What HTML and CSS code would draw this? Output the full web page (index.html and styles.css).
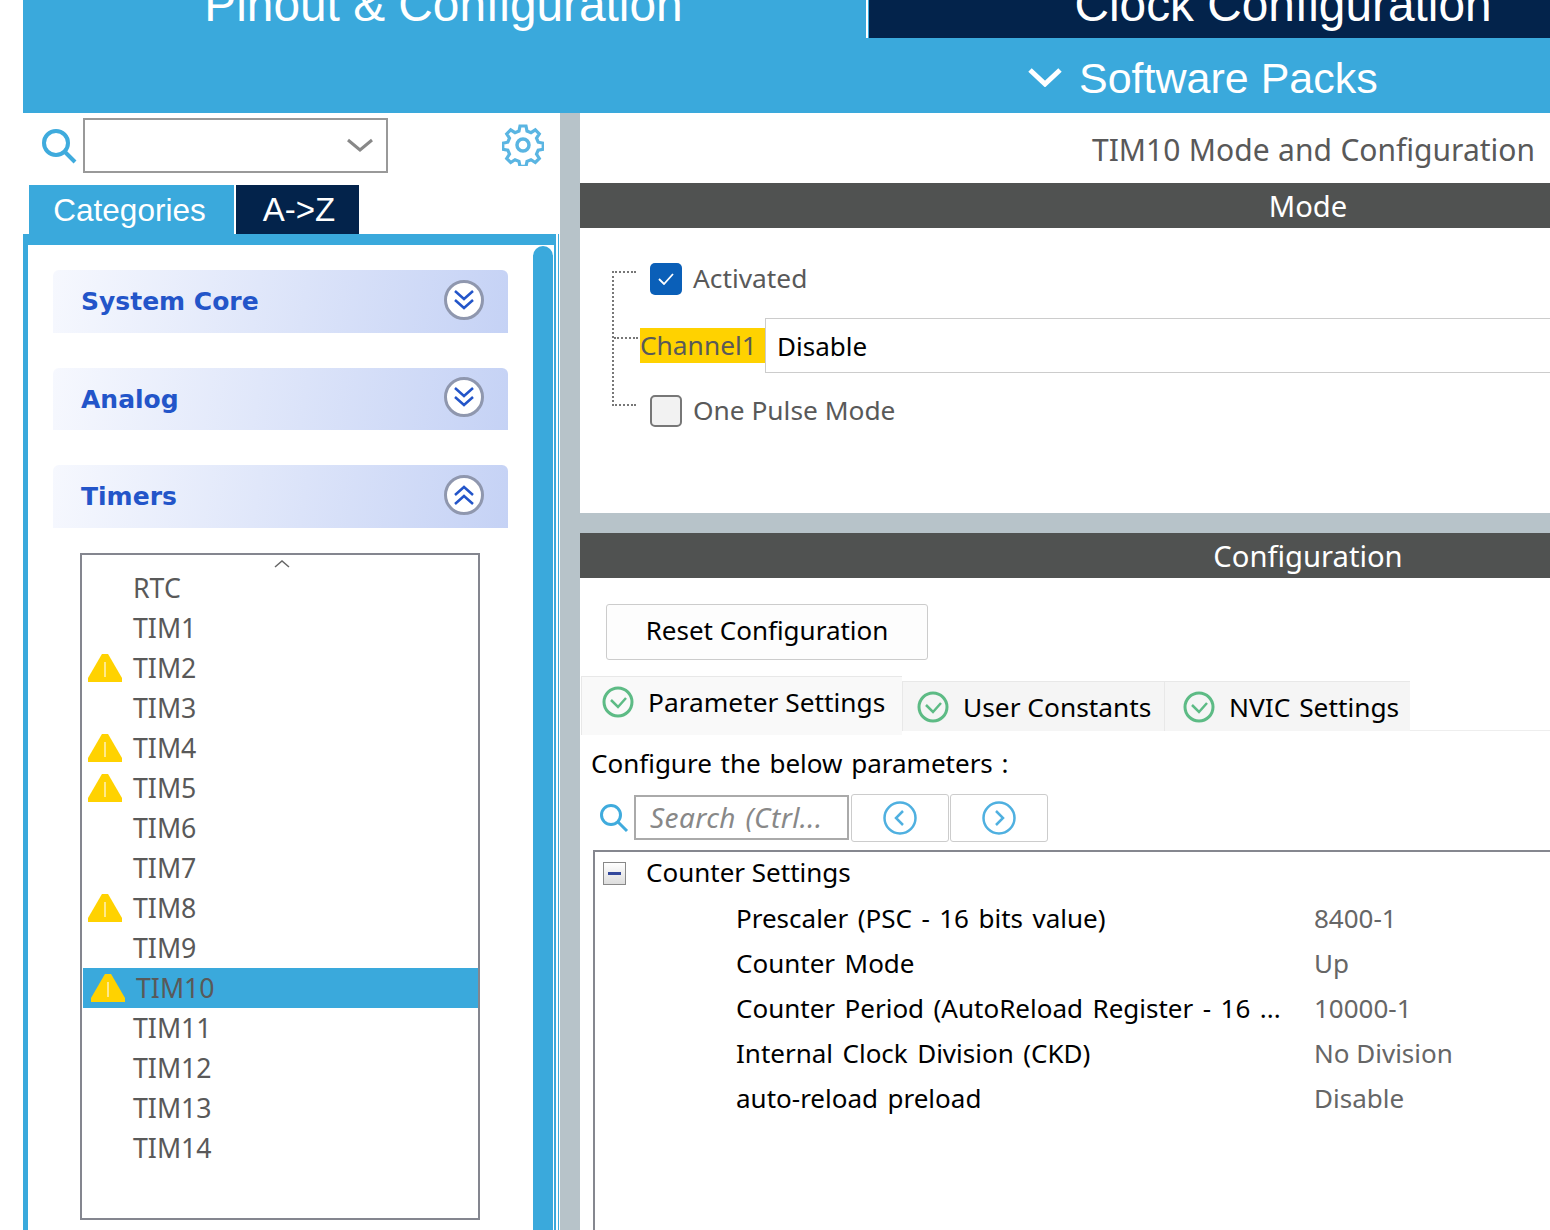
FILE: index.html
```html
<!DOCTYPE html>
<html lang="en">
<head>
  <meta charset="UTF-8">
  <title>TIM10 Mode and Configuration</title>
  <link rel="stylesheet" href="styles.css">
</head>
<body>

  <header class="header">
    <div class="main-tabs">
      <div class="main-tab active">Pinout &amp; Configuration</div>
      <div class="main-tab dark">Clock Configuration</div>
    </div>
    <div class="packs">
      <svg class="packs-arrow" width="34" height="20" viewBox="0 0 34 20"><path d="M2 3 L17 17 L32 3" fill="none" stroke="#fff" stroke-width="5"/></svg>
      <span>Software Packs</span>
    </div>
  </header>

  <div class="main">

    <!-- LEFT SIDE -->
    <aside class="side">
      <div class="side-search">
        <svg class="search-icon" width="36" height="36" viewBox="0 0 36 36"><circle cx="15" cy="15" r="12" fill="none" stroke="#3fabdd" stroke-width="4"/><path d="M24 24 L34 34" stroke="#3fabdd" stroke-width="4"/></svg>
        <div class="combo">
          <svg width="26" height="14" viewBox="0 0 26 14"><path d="M1 2 L13 12 L25 2" fill="none" stroke="#888" stroke-width="3"/></svg>
        </div>
        <svg class="gear" width="42" height="42" viewBox="0 0 42 42">
          <circle cx="21" cy="21" r="6" fill="none" stroke="#5ab5e2" stroke-width="3.500"/>
          <path d="M18 2h6l1 5 4 1.700 4.300-2.800 4 4-2.800 4.300 1.700 4 5 1v6l-5 1-1.700 4 2.800 4.300-4 4-4.300-2.800-4 1.700-1 5h-6l-1-5-4-1.700-4.300 2.800-4-4 2.800-4.300-1.700-4-5-1v-6l5-1 1.700-4-2.800-4.300 4-4 4.300 2.800 4-1.700z" fill="none" stroke="#5ab5e2" stroke-width="3.200"/>
        </svg>
      </div>

      <div class="side-tabs">
        <div class="side-tab active">Categories</div>
        <div class="side-tab dark">A-&gt;Z</div>
      </div>

      <div class="cat-panel">
        <div class="cat-content">
          <div class="cat">
            <span>System Core</span>
            <svg class="cat-btn" width="40" height="40" viewBox="0 0 40 40"><circle cx="20" cy="20" r="18.500" fill="#fff" stroke="#8f97ae" stroke-width="3"/><path d="M11 11 L20 19 L29 11 M11 20 L20 28 L29 20" fill="none" stroke="#2355c9" stroke-width="2.500"/></svg>
          </div>
          <div class="cat short">
            <span>Analog</span>
            <svg class="cat-btn" width="40" height="40" viewBox="0 0 40 40"><circle cx="20" cy="20" r="18.500" fill="#fff" stroke="#8f97ae" stroke-width="3"/><path d="M11 11 L20 19 L29 11 M11 20 L20 28 L29 20" fill="none" stroke="#2355c9" stroke-width="2.500"/></svg>
          </div>
          <div class="cat">
            <span>Timers</span>
            <svg class="cat-btn" width="40" height="40" viewBox="0 0 40 40"><circle cx="20" cy="20" r="18.500" fill="#fff" stroke="#8f97ae" stroke-width="3"/><path d="M11 20 L20 12 L29 20 M11 29 L20 21 L29 29" fill="none" stroke="#2355c9" stroke-width="2.500"/></svg>
          </div>

          <div class="list-box">
            <svg class="list-up" width="16" height="9" viewBox="0 0 16 9"><path d="M1 8 L8 2 L15 8" fill="none" stroke="#666" stroke-width="1.500"/></svg>
            <div class="row"><span class="slot"></span>RTC</div>
            <div class="row"><span class="slot"></span>TIM1</div>
            <div class="row"><span class="slot warn"></span>TIM2</div>
            <div class="row"><span class="slot"></span>TIM3</div>
            <div class="row"><span class="slot warn"></span>TIM4</div>
            <div class="row"><span class="slot warn"></span>TIM5</div>
            <div class="row"><span class="slot"></span>TIM6</div>
            <div class="row"><span class="slot"></span>TIM7</div>
            <div class="row"><span class="slot warn"></span>TIM8</div>
            <div class="row"><span class="slot"></span>TIM9</div>
            <div class="row selected"><span class="slot warn"></span>TIM10</div>
            <div class="row"><span class="slot"></span>TIM11</div>
            <div class="row"><span class="slot"></span>TIM12</div>
            <div class="row"><span class="slot"></span>TIM13</div>
            <div class="row"><span class="slot"></span>TIM14</div>
          </div>
        </div>
        <div class="scrollbar"></div>
      </div>
    </aside>

    <!-- RIGHT SIDE -->
    <section class="right">
      <div class="title">TIM10 Mode and Configuration</div>
      <div class="bar mode-bar">Mode</div>

      <div class="mode">
        <div class="tree-line"></div>
        <div class="mode-row">
          <span class="check on"><svg width="16" height="12" viewBox="0 0 16 12"><path d="M1 6 L6 11 L15 1" fill="none" stroke="#fff" stroke-width="1.800"/></svg></span>
          <span class="mode-label">Activated</span>
        </div>
        <div class="channel-row">
          <span class="channel">Channel1</span>
          <div class="select">Disable</div>
        </div>
        <div class="mode-row pulse">
          <span class="check"></span>
          <span class="mode-label">One Pulse Mode</span>
        </div>
      </div>

      <div class="gap"></div>
      <div class="bar config-bar">Configuration</div>

      <button class="reset">Reset Configuration</button>

      <div class="tabs">
        <div class="tab active">
          <svg width="32" height="32" viewBox="0 0 32 32"><circle cx="16" cy="16" r="14" fill="none" stroke="#5dbb85" stroke-width="3"/><path d="M9 14 L16 21 L24 12" fill="none" stroke="#5dbb85" stroke-width="2.500"/></svg>
          <span>Parameter Settings</span>
        </div>
        <div class="tab">
          <svg width="32" height="32" viewBox="0 0 32 32"><circle cx="16" cy="16" r="14" fill="none" stroke="#5dbb85" stroke-width="3"/><path d="M9 14 L16 21 L24 12" fill="none" stroke="#5dbb85" stroke-width="2.500"/></svg>
          <span>User Constants</span>
        </div>
        <div class="tab">
          <svg width="32" height="32" viewBox="0 0 32 32"><circle cx="16" cy="16" r="14" fill="none" stroke="#5dbb85" stroke-width="3"/><path d="M9 14 L16 21 L24 12" fill="none" stroke="#5dbb85" stroke-width="2.500"/></svg>
          <span>NVIC Settings</span>
        </div>
      </div>

      <div class="params-title">Configure the below parameters :</div>

      <div class="param-search">
        <svg width="30" height="30" viewBox="0 0 30 30"><circle cx="12" cy="12" r="9.500" fill="none" stroke="#3fabdd" stroke-width="3"/><path d="M19 19 L28 28" stroke="#3fabdd" stroke-width="3"/></svg>
        <div class="search-input">Search (Ctrl...</div>
        <div class="nav-btn"><svg width="34" height="34" viewBox="0 0 34 34"><circle cx="17" cy="17" r="15.500" fill="none" stroke="#4fb0e0" stroke-width="2.500"/><path d="M20 10 L13 17 L20 24" fill="none" stroke="#4fb0e0" stroke-width="2.500"/></svg></div>
        <div class="nav-btn"><svg width="34" height="34" viewBox="0 0 34 34"><circle cx="17" cy="17" r="15.500" fill="none" stroke="#4fb0e0" stroke-width="2.500"/><path d="M14 10 L21 17 L14 24" fill="none" stroke="#4fb0e0" stroke-width="2.500"/></svg></div>
      </div>

      <div class="param-tree">
        <div class="group"><span class="minus"></span><span class="group-name">Counter Settings</span></div>
        <div class="param"><span class="param-name">Prescaler (PSC - 16 bits value)</span><span class="param-val">8400-1</span></div>
        <div class="param"><span class="param-name">Counter Mode</span><span class="param-val">Up</span></div>
        <div class="param"><span class="param-name">Counter Period (AutoReload Register - 16 ...</span><span class="param-val">10000-1</span></div>
        <div class="param"><span class="param-name">Internal Clock Division (CKD)</span><span class="param-val">No Division</span></div>
        <div class="param"><span class="param-name">auto-reload preload</span><span class="param-val">Disable</span></div>
      </div>
    </section>
  </div>

</body>
</html>
```

FILE: styles.css
```css
html, body {
  margin: 0;
  height: 1230px;
  overflow: hidden;
}

body {
  font-family: 'Noto Sans', 'Open Sans', sans-serif;
  font-size: 26px;
  background-color: #fff;
  color: #595959;
}

/* top header */
.header {
  margin-left: 23px;
  height: 113px;
  background-color: #3aa9dc;
  font-family: 'Liberation Sans', Arial, sans-serif;
  color: #fff;
  overflow: hidden;
}

.main-tabs {
  display: flex;
  height: 68px;
  margin-top: -30px;
}

.main-tab {
  font-size: 47.8px;
  line-height: 70px;
  text-align: center;
  flex: none;
}

.main-tab.active {
  width: 841px;
  padding-right: 2px;
  border-right: 2px solid #fff;
}

.main-tab.dark {
  width: 828px;
  margin-left: 1px;
  background-color: #03234b;
}

.packs {
  display: flex;
  align-items: center;
  gap: 17px;
  height: 68px;
  padding: 6px 0 0 1005px;
  font-size: 43px;
}

.packs-arrow {
  margin-bottom: 3px;
}

/* layout */
.main {
  display: flex;
  height: 1117px;
  margin-left: 23px;
  background-color: #b7c3c9;
}

.side {
  width: 537px;
  flex: none;
  background-color: #fff;
  overflow: hidden;
}

.side-search {
  display: flex;
  align-items: center;
  height: 72px;
  padding-left: 18px;
}

.search-icon {
  margin-right: 6px;
  margin-top: -6px;
}

.combo {
  display: flex;
  align-items: center;
  justify-content: flex-end;
  box-sizing: border-box;
  width: 305px;
  height: 55px;
  margin-top: -8px;
  padding-right: 13px;
  border: 2px solid #999;
}

.gear {
  margin-left: 114px;
  margin-top: -8px;
}

.side-tabs {
  display: flex;
  height: 49px;
  padding-left: 6px;
  font-family: 'Liberation Sans', Arial, sans-serif;
  color: #fff;
}

.side-tab {
  box-sizing: border-box;
  line-height: 50px;
  text-align: center;
}

.side-tab.active {
  width: 205px;
  padding-right: 4px;
  font-size: 31.5px;
  background-color: #3aa9dc;
}

.side-tab.dark {
  width: 123px;
  margin-left: 2px;
  padding-left: 3px;
  font-size: 33px;
  background-color: #03234b;
}

.cat-panel {
  display: flex;
  box-sizing: border-box;
  width: 533px;
  height: 996px;
  border-top: 11px solid #3aa9dc;
  border-left: 5px solid #3aa9dc;
  border-right: 2px solid #3aa9dc;
  box-shadow: 2px 0 0 #fff, 3px 0 0 #3aa9dc;
}

.cat-content {
  width: 505px;
  flex: none;
  padding-top: 25px;
}

.scrollbar {
  width: 20px;
  margin-top: 1px;
  border-radius: 10px 10px 0 0;
  background-color: #3aa9dc;
}

.cat {
  display: flex;
  align-items: center;
  justify-content: space-between;
  box-sizing: border-box;
  width: 455px;
  height: 63px;
  margin: 0 0 35px 25px;
  padding: 0 24px 0 28px;
  border-radius: 6px 6px 0 0;
  background: linear-gradient(100deg, #f6f8fe, #c5d2f5);
  font-family: 'DejaVu Sans', Verdana, sans-serif;
  font-size: 25px;
  font-weight: bold;
  color: #2355c9;
}

.cat.short {
  height: 62px;
}

.cat-btn {
  margin-top: -4px;
}

.list-box {
  position: relative;
  box-sizing: border-box;
  width: 400px;
  height: 667px;
  margin: -10px 0 0 52px;
  padding-top: 13px;
  border: 2px solid #84868f;
}

.list-up {
  position: absolute;
  left: 192px;
  top: 4px;
}

.row {
  display: flex;
  align-items: center;
  box-sizing: border-box;
  height: 40px;
  padding-bottom: 2px;
  font-size: 26.7px;
}

.slot {
  width: 34px;
  height: 28px;
  margin: 2px 11px 0 6px;
  flex: none;
}

.slot.warn {
  background-color: #ffd200;
  clip-path: polygon(41% 0, 59% 0, 100% 86%, 100% 100%, 0 100%, 0 86%);
  background-image: linear-gradient(#ffe98a, #ffe98a);
  background-size: 2px 15px;
  background-position: 50% 8px;
  background-repeat: no-repeat;
}

.row.selected {
  margin-left: 1px;
  padding-left: 2px;
  background-color: #3aa9dc;
}

/* right side */
.right {
  width: 970px;
  flex: none;
  margin-left: 20px;
  background-color: #fff;
  overflow: hidden;
}

.title {
  height: 70px;
  padding-right: 15px;
  line-height: 74px;
  text-align: right;
  font-size: 30px;
  word-spacing: 0.7px;
  white-space: nowrap;
}

.bar {
  width: 1456px;
  height: 45px;
  line-height: 47px;
  background-color: #505251;
  color: #fff;
  text-align: center;
  font-size: 29.2px;
}

.mode {
  position: relative;
  height: 285px;
}

.tree-line {
  position: absolute;
  left: 32px;
  top: 43px;
  width: 24px;
  height: 135px;
  border-left: 2px dotted #777;
  border-top: 2px dotted #777;
  border-bottom: 2px dotted #777;
  box-sizing: border-box;
}

.tree-line::after {
  content: "";
  position: absolute;
  left: 0;
  top: 64px;
  width: 24px;
  border-top: 2px dotted #777;
}

.mode-row {
  display: flex;
  align-items: center;
  gap: 11px;
  height: 32px;
  padding: 35px 0 0 70px;
}

.mode-row.pulse {
  padding-top: 22px;
}

.mode-label {
  margin-top: -3px;
  font-size: 26.3px;
}

.check {
  display: flex;
  align-items: center;
  justify-content: center;
  box-sizing: border-box;
  width: 32px;
  height: 32px;
  border: 2px solid #777;
  border-radius: 5px;
  background-color: #f2f2f2;
}

.check.on {
  border: none;
  background-color: #0a5fb8;
}

.channel-row {
  display: flex;
  align-items: center;
  margin: 23px 0 0 60px;
}

.channel {
  box-sizing: border-box;
  width: 125px;
  height: 35px;
  flex: none;
  line-height: 35px;
  background-color: #ffd200;
  font-size: 26.3px;
  white-space: nowrap;
}

.select {
  box-sizing: border-box;
  width: 900px;
  height: 55px;
  flex: none;
  padding-left: 11px;
  line-height: 54px;
  border: 1px solid #ccc;
  color: #000;
}

.gap {
  height: 20px;
  background-color: #b7c3c9;
}

.reset {
  display: block;
  box-sizing: border-box;
  width: 322px;
  height: 56px;
  margin: 26px 0 16px 26px;
  padding-bottom: 5px;
  border: 1px solid #ccc;
  border-radius: 3px;
  background-color: #fdfdfd;
  color: #000;
  font-family: inherit;
  font-size: 26px;
}

.tabs {
  display: flex;
  align-items: flex-start;
  height: 59px;
  margin-left: 1px;
  color: #000;
  background: linear-gradient(#fff 54px, #eee 54px, #eee 55px, #fff 55px);
}

.tab {
  display: flex;
  align-items: center;
  box-sizing: border-box;
  width: 262px;
  height: 50px;
  margin-top: 5px;
  padding-left: 14px;
  gap: 14px;
  background-color: #f5f5f5;
  border-top: 1px solid #e8e8e8;
  border-left: 1px solid #e8e8e8;
  font-size: 26.3px;
  white-space: nowrap;
}

.tab:last-child {
  width: 246px;
  padding-left: 18px;
  word-spacing: 2px;
}

.tab.active {
  width: 321px;
  height: 59px;
  margin-top: 0;
  padding: 0 0 9px 20px;
  background-color: #f9f9f9;
}

.params-title {
  height: 54px;
  padding-left: 11px;
  margin-top: 5px;
  line-height: 46px;
  color: #000;
  word-spacing: 2px;
  white-space: nowrap;
}

.param-search {
  display: flex;
  align-items: center;
  height: 48px;
  padding-left: 19px;
}

.search-input {
  box-sizing: border-box;
  width: 215px;
  height: 45px;
  margin: -2px 0 0 5px;
  padding-left: 14px;
  line-height: 41px;
  border: 2px solid #aaa;
  font-size: 28px;
  font-style: italic;
  letter-spacing: 0.4px;
  word-spacing: 2px;
  color: #888;
  white-space: nowrap;
  overflow: hidden;
}

.nav-btn {
  display: flex;
  align-items: center;
  justify-content: center;
  box-sizing: border-box;
  width: 98px;
  height: 48px;
  margin-left: 2px;
  border: 1px solid #ccc;
  border-radius: 3px;
}

.nav-btn + .nav-btn {
  margin-left: 1px;
}

.param-tree {
  box-sizing: border-box;
  width: 1000px;
  height: 400px;
  margin: 8px 0 0 13px;
  border: 2px solid #85878f;
  color: #000;
}

.group {
  display: flex;
  align-items: center;
  height: 43px;
  padding-left: 8px;
}

.group-name {
  margin-top: -4px;
}

.minus {
  position: relative;
  box-sizing: border-box;
  width: 23px;
  height: 23px;
  margin-right: 20px;
  border: 1px solid #888;
  background: linear-gradient(#fff, #ddd);
}

.minus::after {
  content: "";
  position: absolute;
  left: 4px;
  top: 9px;
  width: 13px;
  height: 3px;
  background-color: #33489c;
}

.param {
  display: flex;
  align-items: center;
  height: 45px;
  padding-left: 141px;
}

.param-name {
  width: 578px;
  flex: none;
  word-spacing: 2.7px;
  white-space: nowrap;
}

.param-val {
  color: #666;
  white-space: nowrap;
}
```
